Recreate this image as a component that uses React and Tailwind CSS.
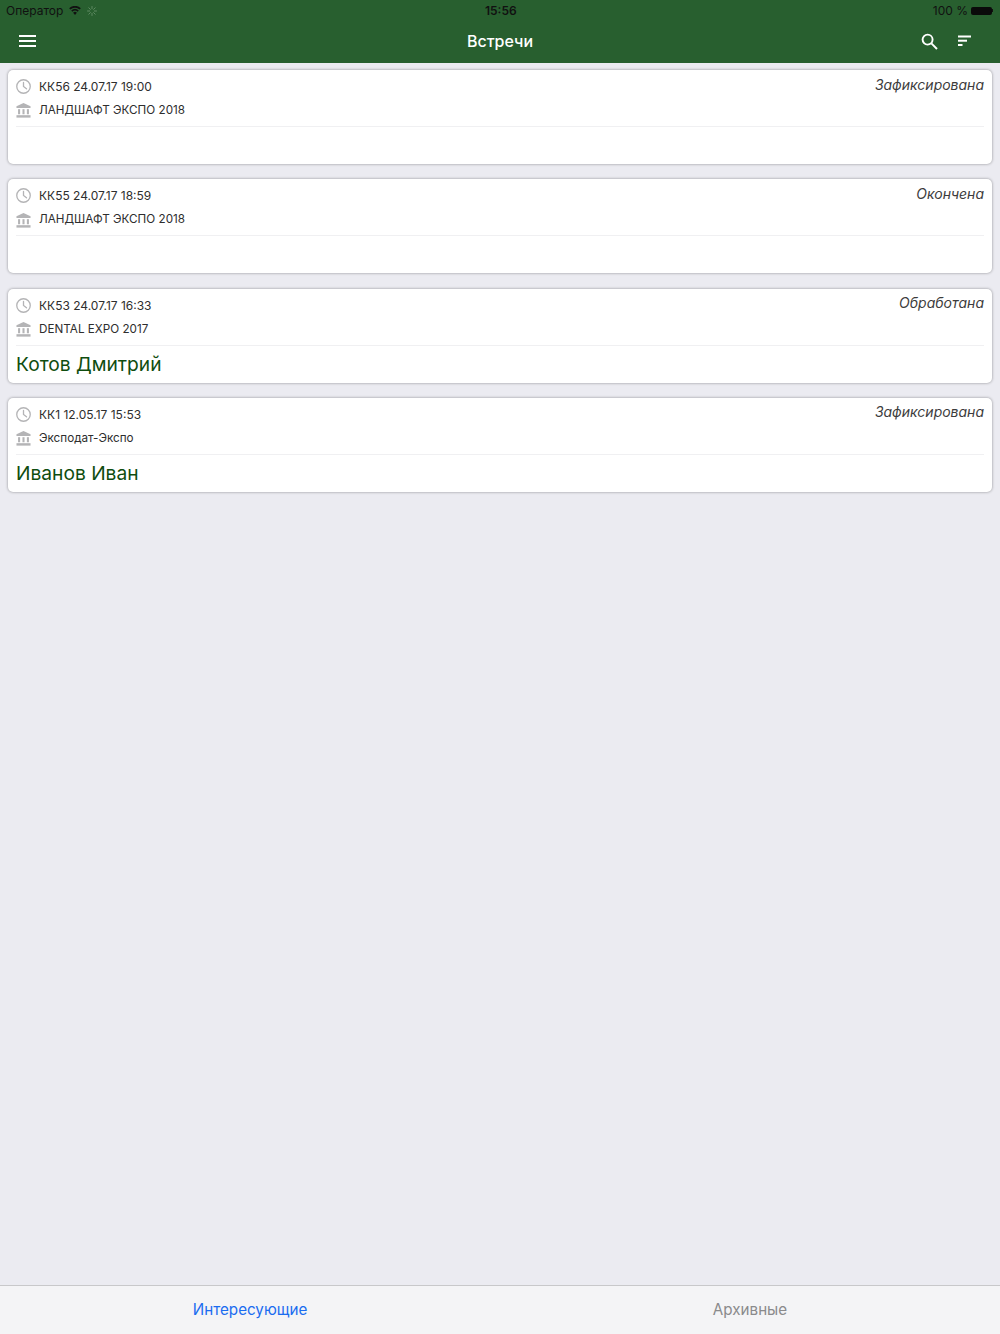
import React from 'react';

const meetings = [
  { code: 'КК56 24.07.17 19:00', place: 'ЛАНДШАФТ ЭКСПО 2018', status: 'Зафиксирована', person: '' },
  { code: 'КК55 24.07.17 18:59', place: 'ЛАНДШАФТ ЭКСПО 2018', status: 'Окончена', person: '' },
  { code: 'КК53 24.07.17 16:33', place: 'DENTAL EXPO 2017', status: 'Обработана', person: 'Котов Дмитрий' },
  { code: 'КК1 12.05.17 15:53', place: 'Эксподат-Экспо', status: 'Зафиксирована', person: 'Иванов Иван' },
];

const ClockIcon = () => (
  <svg width="15" height="15" viewBox="0 0 16 16" fill="none" stroke="#b4b4b6" strokeWidth="1.4" strokeLinecap="round">
    <circle cx="8" cy="8" r="7.2" />
    <path d="M8 3.6V8l3.2 2.4" />
  </svg>
);

const BankIcon = () => (
  <svg width="15" height="15" viewBox="0 0 16 16" fill="#b4b4b6">
    <path d="M8 0L15.5 3.4v1.8H.5V3.4z" />
    <rect x="2.2" y="6.6" width="2.2" height="5.4" />
    <rect x="6.9" y="6.6" width="2.2" height="5.4" />
    <rect x="11.6" y="6.6" width="2.2" height="5.4" />
    <rect x="0.5" y="13" width="15" height="2.6" />
  </svg>
);

const MeetingCard = ({ code, place, status, person }) => (
  <div className="h-[94px] rounded-[5px] bg-white px-2 shadow-[0_0_3px_rgba(0,0,0,0.4)]">
    <div className="flex h-[57px] flex-col border-b border-[#f0f0f2]">
      <div className="flex h-[32px] items-center justify-between pt-[1px]">
        <div className="flex items-center gap-[8px]">
          <ClockIcon />
          <span className="pt-[1px] text-xs text-[#2e2e2e]">{code}</span>
        </div>
        <span className="mb-[5px] text-[14px] italic text-[#3c3c3c]">{status}</span>
      </div>
      <div className="flex items-center gap-[8px]">
        <BankIcon />
        <span className="text-[11.7px] text-[#2e2e2e]">{place}</span>
      </div>
    </div>
    <div className="flex h-[37px] items-center pt-[1px] text-[19.2px] text-[#0f4d0f]">{person}</div>
  </div>
);

const App = () => {
  return (
    <div className="flex h-[1334px] w-[1000px] flex-col bg-[#ebebf1] font-['Inter',sans-serif]">
      {/* Status + nav bar */}
      <div className="h-[63px] bg-[#285f2f]">
        <div className="relative flex h-[20px] items-center justify-between pl-[6px] pr-[7px] pt-[1px] text-xs text-[#111]">
          <div className="flex items-center">
            <span>Оператор</span>
            <svg className="ml-[6px]" width="12" height="9" viewBox="0 0 13 10" fill="#111">
              <path d="M6.5 10L4.4 7.4a3.2 3.2 0 014.2 0zM3.5 6.3L2.3 4.9a6.4 6.4 0 018.4 0L9.5 6.3a4.6 4.6 0 00-6 0zM1.4 3.8L0 2.4a9.6 9.6 0 0113 0l-1.4 1.4a7.7 7.7 0 00-10.2 0z" />
            </svg>
            <svg className="ml-[6px]" width="10" height="10" viewBox="0 0 10 10" stroke="#5e8a62" strokeWidth="1" strokeLinecap="round">
              <path d="M5 .5v2.2M5 7.3v2.2M.5 5h2.2M7.3 5h2.2M1.8 1.8l1.6 1.6M6.6 6.6l1.6 1.6M8.2 1.8L6.6 3.4M3.4 6.6L1.8 8.2" />
            </svg>
          </div>
          <span className="absolute left-[485px] font-semibold">15:56</span>
          <div className="flex items-center gap-[3px]">
            <span>100 %</span>
            <div className="h-[8px] w-[21px] rounded-[2px] bg-[#0a0a0a]" />
            <div className="ml-[-3px] h-[3px] w-[1px] bg-[#111]" />
          </div>
        </div>
        <div className="flex h-[43px] items-center px-[19px] pb-[1px]">
          <div className="flex-1">
            <svg width="17" height="14" viewBox="0 0 17 14" fill="#fff">
              <rect y="1" width="17" height="2" />
              <rect y="6" width="17" height="2" />
              <rect y="11" width="17" height="2" />
            </svg>
          </div>
          <span className="text-base font-medium text-white">Встречи</span>
          <div className="flex flex-1 items-center justify-end gap-[20px]">
            <svg width="17" height="17" viewBox="0 0 17 17" fill="none" stroke="#fff" strokeWidth="1.9">
              <circle cx="6.6" cy="6.6" r="5" />
              <path d="M10.4 10.4l5.6 5.6" />
            </svg>
            <svg className="mr-[10px]" width="13" height="12" viewBox="0 0 13 12" fill="#fff">
              <rect y="0.5" width="13" height="2" />
              <rect y="4.7" width="9" height="2" />
              <rect y="9" width="4.5" height="2" />
            </svg>
          </div>
        </div>
      </div>

      {/* Meetings */}
      <div className="flex flex-1 flex-col gap-[15.3px] px-2 pt-[7px]">
        {meetings.map((m) => (
          <MeetingCard key={m.code} {...m} />
        ))}
      </div>

      {/* Bottom tabs */}
      <div className="flex h-[49px] border-t border-[#c8c8ca] bg-[#f4f4f6] text-[15.2px]">
        <div className="flex flex-1 items-center justify-center text-[#1a6cf0]">Интересующие</div>
        <div className="flex flex-1 items-center justify-center text-[#8a8a8c]">Архивные</div>
      </div>
    </div>
  );
};

export default App;
